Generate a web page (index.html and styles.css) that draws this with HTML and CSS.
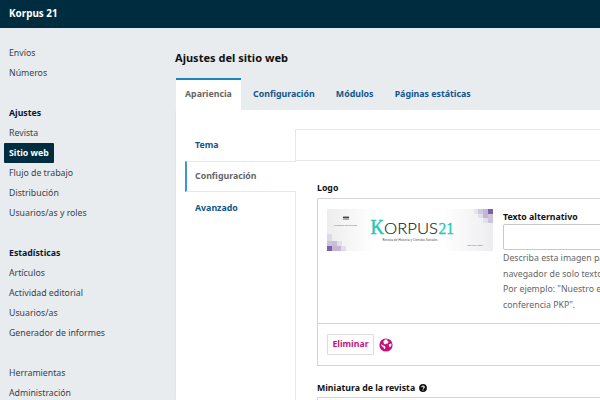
FILE: index.html
```
<!DOCTYPE html>
<html lang="es">
<head>
<meta charset="utf-8">
<title>Korpus 21</title>
<link rel="stylesheet" href="styles.css">
</head>
<body>
<header class="topbar">Korpus 21</header>
<div class="layout">
  <nav class="sidebar">
    <ul>
      <li><a>Envíos</a></li>
      <li><a>Números</a></li>
    </ul>
    <ul>
      <li class="heading">Ajustes</li>
      <li><a>Revista</a></li>
      <li><a class="current">Sitio web</a></li>
      <li><a>Flujo de trabajo</a></li>
      <li><a>Distribución</a></li>
      <li><a>Usuarios/as y roles</a></li>
    </ul>
    <ul>
      <li class="heading">Estadísticas</li>
      <li><a>Artículos</a></li>
      <li><a>Actividad editorial</a></li>
      <li><a>Usuarios/as</a></li>
      <li><a>Generador de informes</a></li>
    </ul>
    <ul>
      <li><a>Herramientas</a></li>
      <li><a>Administración</a></li>
    </ul>
  </nav>
  <main class="main">
    <h1>Ajustes del sitio web</h1>
    <div class="tabs">
      <a class="tab active">Apariencia</a>
      <a class="tab">Configuración</a>
      <a class="tab">Módulos</a>
      <a class="tab">Páginas estáticas</a>
    </div>
    <section class="panel">
      <div class="side-tabs">
        <a class="side-tab">Tema</a>
        <a class="side-tab active">Configuración</a>
        <a class="side-tab">Avanzado</a>
        <span class="side-rest"></span>
      </div>
      <div class="form">
        <div class="form-head"></div>
        <div class="field">
          <div class="label">Logo</div>
          <div class="upload">
            <div class="upload-body">
              <svg class="banner" width="166" height="42" viewBox="0 0 166 42">
                <defs>
                  <linearGradient id="fade">
                    <stop offset="0" stop-color="#ededee"/>
                    <stop offset=".28" stop-color="#fff"/>
                    <stop offset=".7" stop-color="#fff"/>
                    <stop offset="1" stop-color="#ededf0"/>
                  </linearGradient>
                </defs>
                <rect width="166" height="42" fill="url(#fade)"/>
                <g fill="#7d5fae">
                  <rect y="37" width="5" height="5"/>
                  <rect x="5" y="37" width="5" height="5" opacity=".4"/>
                  <rect y="32" width="5" height="5" opacity=".3"/>
                  <rect x="5" y="32" width="5" height="5" opacity=".35"/>
                  <rect x="10" y="32" width="5" height="5" opacity=".12"/>
                  <rect x="10" y="37" width="4" height="5" opacity=".4"/>
                  <rect x="14" y="37" width="5" height="5" opacity=".15"/>
                  <rect y="25" width="5" height="7" opacity=".14"/>
                  <rect x="161" width="5" height="5"/>
                  <rect x="156" width="5" height="5" opacity=".4"/>
                  <rect x="151" width="5" height="5" opacity=".28"/>
                  <rect x="147" width="4" height="5" opacity=".1"/>
                  <rect x="161" y="5" width="5" height="5" opacity=".28"/>
                  <rect x="156" y="5" width="5" height="4" opacity=".4"/>
                  <rect x="151" y="5" width="5" height="4" opacity=".13"/>
                  <rect x="161" y="10" width="5" height="4" opacity=".3"/>
                  <rect x="156" y="9" width="5" height="5" opacity=".1"/>
                </g>
                <path d="M16 7h6v4h-6z" fill="#aaa"/>
                <path d="M16 8.500h6" stroke="#444"/>
                <text class="crest" x="7" y="16.500" textLength="23" lengthAdjust="spacingAndGlyphs">El Colegio Mexiquense</text>
                <text class="teal cap" x="43.500" y="24.500" textLength="13.500" lengthAdjust="spacingAndGlyphs">K</text>
                <text class="word" x="57" y="24.500" textLength="54" lengthAdjust="spacingAndGlyphs">ORPUS</text>
                <text class="teal num" x="111.500" y="24.500" textLength="15.500" lengthAdjust="spacingAndGlyphs">21</text>
                <text class="tagline" x="55.500" y="31.500" textLength="55" lengthAdjust="spacingAndGlyphs">Revista de Historia y Ciencias Sociales</text>
                <text class="crest" x="140" y="36.500" textLength="16" lengthAdjust="spacingAndGlyphs">ISSN 2594-200X</text>
              </svg>
              <div class="alt">
                <div class="label">Texto alternativo</div>
                <div class="input"></div>
                <p>Describa esta imagen para quien use un<br>navegador de solo texto o ayudas técnicas.<br>Por ejemplo: "Nuestro editor en la<br>conferencia PKP".</p>
              </div>
            </div>
            <div class="upload-foot">
              <a class="button">Eliminar</a>
              <svg class="globe" width="14" height="14" viewBox="0 0 14 14">
                <circle cx="7" cy="7" r="6.600" fill="#c5127b"/>
                <path d="M6.200 1.500 8.800 1.600 8 3 9.700 3.600 9 5.300 7.300 5.700 6 6.500 4.900 5.600 4.300 3.600ZM2.200 6 3.800 7.200 6 8.200 6.400 9.600 5.700 11.300 4.500 9.500 2.700 8ZM9.800 6.300 12.300 5.400 12.500 7.300 11.200 9.300 10 8.300Z" fill="#fff"/>
              </svg>
            </div>
          </div>
        </div>
        <div class="field next">
          <div class="label">Miniatura de la revista
            <svg width="8" height="8" viewBox="0 0 8 8"><circle cx="4" cy="4" r="3.900" fill="#111"/><path d="M2.700 3.100Q2.900 2 4 2T5.300 3.100Q5.300 3.700 4 4.500M4 5.400v1" fill="none" stroke="#fff" stroke-width="1.100"/></svg>
          </div>
          <div class="upload empty"></div>
        </div>
      </div>
    </section>
  </main>
</div>
</body>
</html>
```
FILE: styles.css
```
* { box-sizing: border-box; }
body {
  margin: 0;
  width: 600px;
  height: 400px;
  overflow: hidden;
  background: #e9ecee;
  font: 8.75px/20px "Noto Sans", sans-serif;
  color: #111;
}
.topbar {
  height: 28px;
  padding-left: 9px;
  background: #002c40;
  color: #fff;
  font-size: 9.9px;
  font-weight: 700;
  line-height: 27px;
}
.layout { display: flex; height: 372px; }
.sidebar { flex: 0 0 176px; padding: 15px 0 0 4px; color: #33424c; }
.sidebar ul { margin: 0 0 20px; padding: 0; list-style: none; }
.sidebar li { height: 20px; padding-left: 5px; white-space: nowrap; }
.sidebar .heading { color: #06183a; font-weight: 700; }
.sidebar .current {
  display: inline-block;
  margin-left: -5px;
  padding: 0 5px;
  border-radius: 1px;
  background: #002c40;
  color: #fff;
  font-weight: 700;
}
.main { flex: 1; min-width: 0; }
h1 { margin: 20px 0 10px -1px; font-size: 11.05px; line-height: 20px; }
.tabs { display: flex; height: 32px; font-size: 8.8px; font-weight: 700; line-height: 32px; color: #12558c; }
.tab { padding: 0 9px; margin-right: 3.2px; white-space: nowrap; }
.tab.active {
  border-top: 2px solid #1d83bd;
  background: #fff;
  color: #666;
  line-height: 29px;
}
.panel {
  display: flex;
  height: 290px;
  padding: 19px 0 0 9px;
  background: #fff;
  box-shadow: 0 0 2px #d8dde0;
  clip-path: inset(0 0 0 -3px);
}
.side-tabs { display: flex; flex: 0 0 111px; flex-direction: column; }
.side-tab {
  height: 32px;
  padding-left: 10px;
  border-right: 1px solid #e8e8e8;
  color: #12558c;
  font-size: 8.8px;
  font-weight: 700;
  line-height: 33px;
}
.side-tab.active {
  height: 31px;
  padding-left: 8px;
  border: solid #e8e8e8;
  border-width: 1px 0;
  border-left: 2px solid #3e97c6;
  color: #666;
  line-height: 29px;
}
.side-rest { flex: 1; border-right: 1px solid #e8e8e8; }
.form { flex: 1; min-width: 0; border-top: 1px solid #e8e8e8; }
.form-head { height: 31px; border-bottom: 1px solid #e8e8e8; }
.field { margin: 21px 0 0 21px; }
.label { font-weight: 700; line-height: 12px; }
.upload { height: 168px; margin-top: 4px; border: 1px solid #d4d4d4; border-right: 0; border-radius: 2px 0 0 0; }
.upload-body { display: flex; height: 124px; padding: 10px 0 0 9px; gap: 10px; overflow: hidden; }
.banner { flex: none; }
.alt { flex: 0 0 190px; padding-top: 2px; }
.input { height: 26px; margin-top: 1px; border: 1px solid #c8c8c8; border-radius: 2px; }
.alt p { margin: 1px 0 0; color: #666; line-height: 15.7px; white-space: nowrap; }
.upload-foot { display: flex; height: 42px; align-items: center; gap: 5px; padding-left: 9px; border-top: 1px solid #d4d4d4; }
.button { width: 47px; height: 21px; border: 1px solid #ddd; border-radius: 1px; color: #c5127b; font-weight: 700; line-height: 18px; text-align: center; }
.next { margin-top: 16px; }
.next .upload { margin-top: 3px; }
.label svg { margin-left: 2px; vertical-align: -1px; }
.empty { height: 20px; }
.word { font: 300 16.5px Lato, sans-serif; fill: #222; stroke: #222; stroke-width: .15; }
.teal { fill: #22c8b2; stroke: #22c8b2; font-family: "Liberation Serif", serif; }
.cap { font-size: 22px; stroke-width: .5; }
.num { font-size: 17.5px; stroke-width: .3; }
.crest { font: 2.300px "Noto Sans", sans-serif; fill: #666; }
.tagline { font: 3.400px "Noto Sans", sans-serif; fill: #444; }
```
